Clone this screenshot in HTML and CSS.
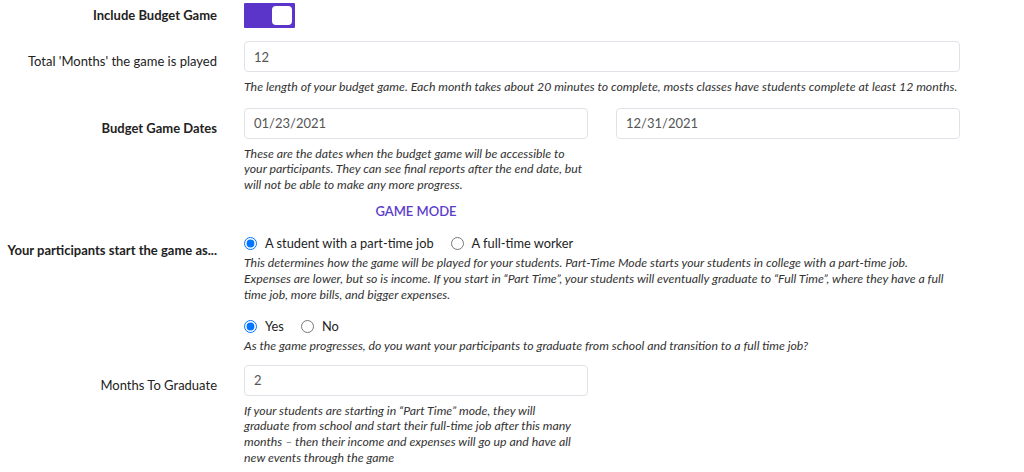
FILE: index.html
```html
<!DOCTYPE html>
<html lang="en">
<head>
  <meta charset="UTF-8" />
  <meta name="viewport" content="width=device-width, initial-scale=1.0" />
  <title>Budget Game Settings</title>
  <link rel="stylesheet" href="styles.css">
</head>
<body>
  <form class="settings">
    <div class="row row-toggle">
      <label class="label bold">Include Budget Game</label>
      <div class="field">
        <span class="toggle"><span class="knob"></span></span>
      </div>
    </div>

    <div class="row">
      <label class="label">Total 'Months' the game is played</label>
      <div class="field">
        <input class="input" type="text" value="12">
        <p class="help">The length of your budget game. Each month takes about 20 minutes to complete, mosts classes have students complete at least 12 months.</p>
      </div>
    </div>

    <div class="row">
      <label class="label bold">Budget Game Dates</label>
      <div class="field">
        <div class="pair">
          <div>
            <input class="input" type="text" value="01/23/2021">
            <p class="help">These are the dates when the budget game will be accessible to your participants. They can see final reports after the end date, but will not be able to make any more progress.</p>
            <h3 class="section-title">GAME MODE</h3>
          </div>
          <div>
            <input class="input" type="text" value="12/31/2021">
          </div>
        </div>
      </div>
    </div>

    <div class="row">
      <label class="label bold label-radio">Your participants start the game as...</label>
      <div class="field">
        <div class="radios">
          <label class="radio"><input type="radio" name="mode" checked> A student with a part-time job</label>
          <label class="radio"><input type="radio" name="mode"> A full-time worker</label>
        </div>
        <p class="help help-tight">This determines how the game will be played for your students. Part-Time Mode starts your students in college with a part-time job.<br>Expenses are lower, but so is income. If you start in “Part Time”, your students will eventually graduate to “Full Time”, where they have a full<br>time job, more bills, and bigger expenses.</p>
      </div>
    </div>

    <div class="row row-radio">
      <div class="label"></div>
      <div class="field">
        <div class="radios">
          <label class="radio"><input type="radio" name="grad" checked> Yes</label>
          <label class="radio"><input type="radio" name="grad"> No</label>
        </div>
        <p class="help help-tight">As the game progresses, do you want your participants to graduate from school and transition to a full time job?</p>
      </div>
    </div>

    <div class="row">
      <label class="label">Months To Graduate</label>
      <div class="field">
        <div class="pair">
          <div>
            <input class="input" type="text" value="2">
            <p class="help">If your students are starting in “Part Time” mode, they will<br>graduate from school and start their full-time job after this many<br>months – then their income and expenses will go up and have all<br>new events through the game</p>
          </div>
        </div>
      </div>
    </div>
  </form>
</body>
</html>
```

FILE: styles.css
```css
* { box-sizing: border-box; margin: 0; padding: 0; }
body {
  background: #fff;
  color: #333;
  font-family: Lato, 'Open Sans', sans-serif;
  font-size: 13px;
}
.settings {
  padding-top: 3px;
}
.row {
  display: grid;
  grid-template-columns: 217px 716px;
  column-gap: 27px;
  margin-bottom: 13px;
}
.label {
  text-align: right;
  padding-top: 11px;
  line-height: 18px;
  color: #222;
}
.bold { font-weight: bold; }
.row-toggle .label { padding-top: 3px; }
.label-radio { padding-top: 8px; }
.row-radio {
  padding-top: 1px;
  margin-bottom: 11px;
}
.toggle {
  display: flex;
  justify-content: flex-end;
  align-items: center;
  width: 51px;
  height: 25px;
  padding-right: 3px;
  background-color: #5b35c9;
  border-radius: 1px;
}
.knob {
  width: 20px;
  height: 19px;
  background: #fff;
  border-radius: 4px;
}
.input {
  display: block;
  width: 100%;
  height: 31px;
  padding: 0 9px;
  font-family: inherit;
  font-size: 13px;
  color: #555;
  border: 1px solid #dfe3e8;
  border-radius: 4px;
  background: #fff;
}
.help {
  margin-top: 7px;
  font-size: 12.3px;
  font-style: italic;
  line-height: 15.6px;
  color: #333;
}
.help-tight { margin-top: 3px; }
.pair {
  display: grid;
  grid-template-columns: 344px 344px;
  column-gap: 28px;
}
.section-title {
  margin-top: 10px;
  text-align: center;
  font-size: 13px;
  font-weight: 600;
  line-height: 18px;
  color: #5b3ccc;
}
.radios {
  display: flex;
  gap: 17px;
  padding-top: 1px;
  line-height: 18px;
}
.radio {
  display: flex;
  align-items: center;
  gap: 8px;
  font-size: 12.8px;
  color: #222;
}
.radio input {
  width: 13px;
  height: 13px;
  margin: 0;
}
```
